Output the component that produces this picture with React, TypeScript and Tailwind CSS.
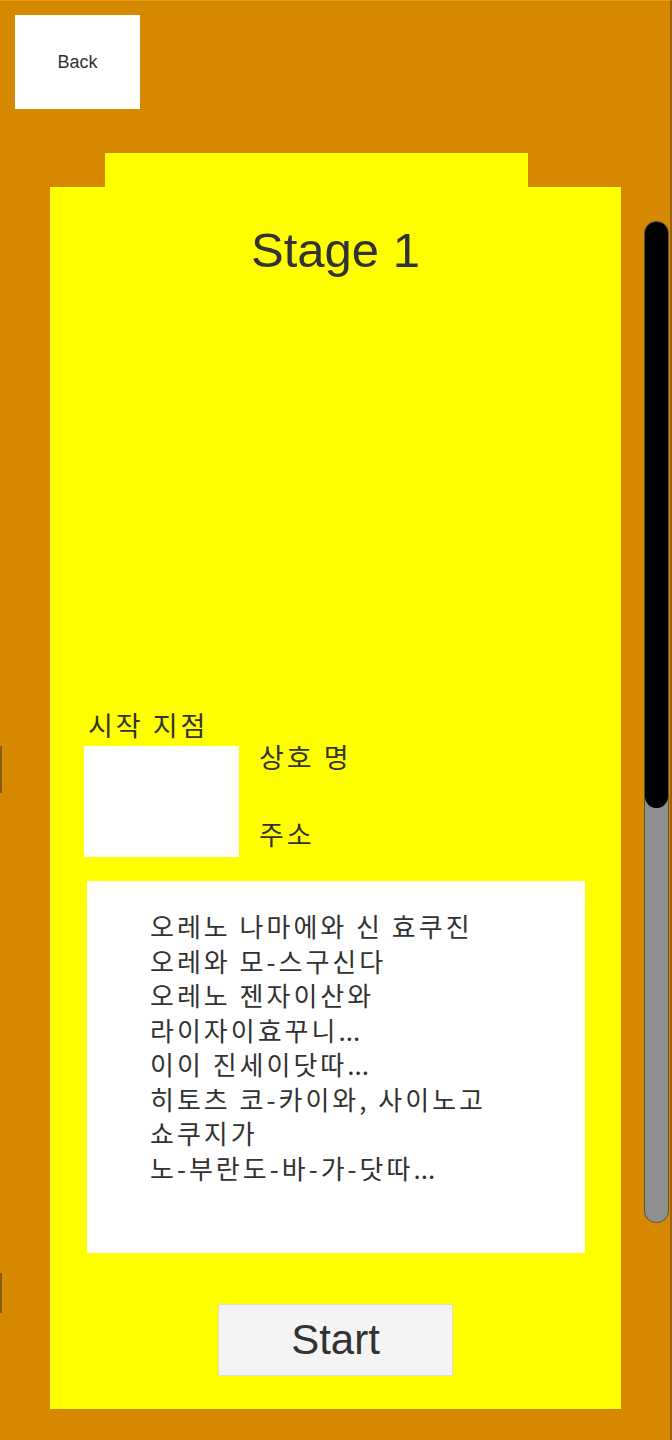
const lines = [
  '오레노 나마에와 신 효쿠진',
  '오레와 모-스구신다',
  '오레노 젠자이산와',
  '라이자이효꾸니...',
  '이이 진세이닷따...',
  '히토츠 코-카이와, 사이노고',
  '쇼쿠지가',
  '노-부란도-바-가-닷따...',
];

const kr = "font-['Noto_Sans_CJK_KR',sans-serif] tracking-[3px]";

// dots look too airy with the letter spacing, so keep them tight
function Line({ text }: { text: string }) {
  const trail = text.endsWith('...');
  const body = trail ? text.slice(0, -3) : text;
  return (
    <div>
      {body}
      {trail && <span className="tracking-normal">...</span>}
    </div>
  );
}

export default function App() {
  return (
    <div className="relative w-[672px] h-[1440px] overflow-hidden bg-[#d68800] border-t border-t-[#e49a1c] border-r-2 border-r-[#9c6400] font-['Liberation_Sans',Arial,sans-serif] text-[#323232]">
      {/* edge slivers */}
      <div className="absolute left-0 top-[745px] w-[2px] h-[47px] bg-[#8a5a10]" />
      <div className="absolute left-0 top-[1272px] w-[2px] h-[40px] bg-[#8a5a10]" />

      {/* Back */}
      <button className="ml-[15px] mt-[14px] w-[125px] h-[94px] bg-white flex items-center justify-center text-[18px] text-[#323232]">
        Back
      </button>

      {/* tab */}
      <div className="ml-[105px] mt-[44px] w-[423px] h-[34px] bg-[#ffff00]" />

      <div className="flex">
        {/* panel */}
        <div className="ml-[50px] w-[571px] h-[1222px] bg-[#ffff00] flex flex-col">
          <h1 className="mt-[39px] h-[48px] leading-[48px] text-[49px] text-center">Stage 1</h1>

          <div className={`${kr} ml-[38px] mt-[437px] h-[28px] leading-[28px] text-[27px]`}>시작 지점</div>

          <div className="mt-[7px] flex">
            <div className="ml-[34px] w-[155px] h-[111px] bg-white" />
            <div className={`${kr} ml-[20px] flex flex-col text-[27px] leading-[28px]`}>
              <div className="-mt-[3px]">상호 명</div>
              <div className="mt-[49px]">주소</div>
            </div>
          </div>

          <div className={`${kr} ml-[37px] mt-[24px] w-[498px] h-[372px] bg-white pl-[63px] pt-[28px] text-[26px] leading-[34.5px]`}>
            {lines.map((l) => (
              <Line key={l} text={l} />
            ))}
          </div>

          <button className="ml-[168px] mt-[51px] w-[235px] h-[72px] bg-[#f4f4f4] border border-[#dcdcc8] rounded-[2px] text-[42px] leading-none flex items-center justify-center text-[#323232]">
            Start
          </button>
        </div>

        {/* scrollbar */}
        <div className="ml-[23px] mt-[34px] w-[25px] h-[1002px] rounded-[12px] bg-[#8f8f8f] border border-[#5e5038] overflow-hidden">
          <div className="h-[586px] rounded-t-[10px] rounded-b-[14px] bg-black" />
        </div>
      </div>
    </div>
  );
}
